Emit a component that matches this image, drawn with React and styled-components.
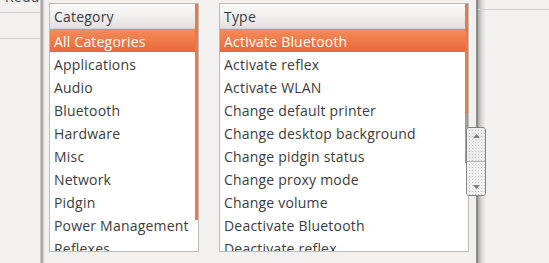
import React from "react";
import styled, { createGlobalStyle } from "styled-components";

const Global = createGlobalStyle`
  html, body { margin: 0; padding: 0; }
  body {
    background: #f2f1f0;
    width: 549px;
    height: 263px;
    overflow: hidden;
    font-family: "Open Sans", "DejaVu Sans", sans-serif;
  }
`;

const Screen = styled.div`
  display: flex;
  width: 549px;
  height: 263px;
  overflow: hidden;
  background: #f2f1f0;
`;

const LeftPane = styled.div`
  flex: 0 0 40px;
  display: flex;
  flex-direction: column;
  overflow: hidden;
`;

const LeftTitle = styled.div`
  height: 12px;
  border-bottom: 1px solid #cfcdca;
  overflow: hidden;
  white-space: nowrap;
  font-size: 14px;
  letter-spacing: 0.2px;
  color: #4a4a4a;
  padding-left: 5px;
  span { display: block; line-height: 16px; margin-top: -11px; }
`;

const LeftBar = styled.div`
  height: 25px;
  border-bottom: 1px solid #cfcdca;
`;

const Dialog = styled.div`
  flex: 0 0 438px;
  box-sizing: border-box;
  position: relative;
  padding: 3px 0 0 9px;
  border-right: 2px solid #8b8b8b;
  background: linear-gradient(
    to right,
    #d2d1cf 0px,
    #b9b8b6 1px,
    #9e9d9b 2px,
    #bfbebc 3px,
    #e3e2e0 4px,
    #f2f1f0 5px
  );
`;

const Lists = styled.div`
  display: flex;
  gap: 20px;
`;

const ListFrame = styled.div`
  position: relative;
  width: ${(p) => p.$w}px;
`;

const ListBox = styled.div`
  position: relative;
  box-sizing: border-box;
  width: 100%;
  height: 249px;
  border: 1px solid #bdbbb8;
  background: #ffffff;
  overflow: hidden;
`;

const Header = styled.div`
  height: 24px;
  line-height: 25px;
  padding-left: 4px;
  border-bottom: 1px solid #cfcfcf;
  background: linear-gradient(to bottom, #fafafa 0%, #f0efee 50%, #e2e1e0 100%);
  color: #3c3c3c;
  font-size: 14px;
  letter-spacing: 0.2px;
  white-space: nowrap;
`;

const Row = styled.div`
  height: 23px;
  line-height: 25px;
  padding-left: 4px;
  font-size: 14px;
  letter-spacing: 0.2px;
  white-space: nowrap;
  color: ${(p) => (p.$sel ? "#ffffff" : "#3c3c3c")};
  background: ${(p) =>
    p.$sel ? "linear-gradient(to bottom, #f58c5c 0%, #f07a49 50%, #e9683b 100%)" : "transparent"};
`;

const Indicator = styled.div`
  position: absolute;
  right: 0;
  top: 0;
  width: 3px;
  height: ${(p) => p.$h}px;
  background: #ef7845;
`;

const Trough = styled.div`
  position: absolute;
  right: 0;
  top: ${(p) => p.$top}px;
  width: 3px;
  height: ${(p) => p.$h}px;
  background: #9e9e9e;
`;

const Thumb = styled.div`
  position: absolute;
  left: 247px;
  top: 124px;
  width: 20px;
  height: 69px;
  box-sizing: border-box;
  border: 1px solid #838383;
  border-radius: 3px;
  background: #e8e8e8;
  box-shadow: inset 0 0 0 1px #f7f7f7;
  display: flex;
  flex-direction: column;
  overflow: hidden;
`;

const ThumbHalf = styled.div`
  flex: 1;
  position: relative;
  display: flex;
  justify-content: center;
  align-items: ${(p) => (p.$up ? "flex-start" : "flex-end")};
  padding: ${(p) => (p.$up ? "6px 0 0" : "0 0 6px")};
  background-color: ${(p) => (p.$up ? "#ececec" : "#f1f1f1")};
  background-image: radial-gradient(circle, #c2c2c2 0.7px, transparent 0.9px);
  background-size: 3px 3px;
  background-position: 1px 1px;
  border-top: ${(p) => (p.$up ? "none" : "1px solid #b4b4b4")};
`;

const Arrow = styled.svg`
  display: block;
  width: 7px;
  height: 4px;
`;

const RightPane = styled.div`
  flex: 1;
  background: linear-gradient(
    to right,
    #a9a9a9 0px,
    #c3c3c3 2px,
    #d9d8d7 4px,
    #e8e7e6 6px,
    #f2f1f0 8px
  );
`;

const RightBar = styled.div`
  height: 9px;
  border-bottom: 1px solid #d3d1ce;
`;

const categories = [
  "All Categories",
  "Applications",
  "Audio",
  "Bluetooth",
  "Hardware",
  "Misc",
  "Network",
  "Pidgin",
  "Power Management",
  "Reflexes",
];

const types = [
  "Activate Bluetooth",
  "Activate reflex",
  "Activate WLAN",
  "Change default printer",
  "Change desktop background",
  "Change pidgin status",
  "Change proxy mode",
  "Change volume",
  "Deactivate Bluetooth",
  "Deactivate reflex",
];

export default function App() {
  return (
    <>
      <Global />
      <Screen>
        <LeftPane>
          <LeftTitle>
            <span>Reduce</span>
          </LeftTitle>
          <LeftBar />
        </LeftPane>
        <Dialog>
          <Lists>
            <ListFrame $w={150}>
              <ListBox>
                <Header>Category</Header>
                {categories.map((c, i) => (
                  <Row key={c} $sel={i === 0}>
                    {c}
                  </Row>
                ))}
                <Indicator $h={216} />
              </ListBox>
            </ListFrame>
            <ListFrame $w={250}>
              <ListBox>
                <Header>Type</Header>
                {types.map((t, i) => (
                  <Row key={t} $sel={i === 0}>
                    {t}
                  </Row>
                ))}
                <Indicator $h={109} />
                <Trough $top={109} $h={50} />
              </ListBox>
              <Thumb>
                <ThumbHalf $up>
                  <Arrow viewBox="0 0 7 4">
                    <path d="M0 4 L3.5 0 L7 4 Z" fill="#7c7c7c" />
                  </Arrow>
                </ThumbHalf>
                <ThumbHalf>
                  <Arrow viewBox="0 0 7 4">
                    <path d="M0 0 L3.5 4 L7 0 Z" fill="#7c7c7c" />
                  </Arrow>
                </ThumbHalf>
              </Thumb>
            </ListFrame>
          </Lists>
        </Dialog>
        <RightPane>
          <RightBar />
        </RightPane>
      </Screen>
    </>
  );
}
